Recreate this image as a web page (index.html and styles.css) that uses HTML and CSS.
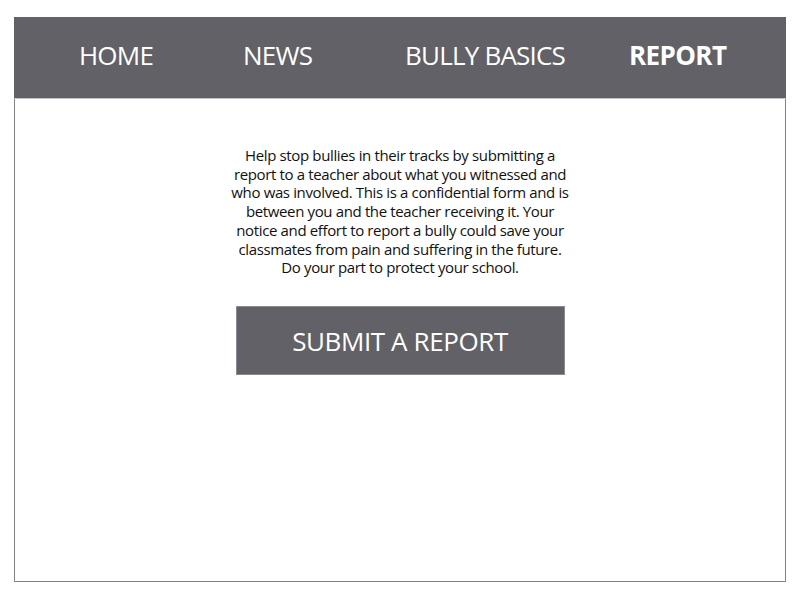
FILE: index.html
```html
<!DOCTYPE html>
<html lang="en">
<head>
<meta charset="utf-8">
<title>Report</title>
<link rel="stylesheet" href="styles.css">
</head>
<body>
<div class="frame">
  <nav class="nav">
    <a class="nav-item">HOME</a>
    <a class="nav-item">NEWS</a>
    <a class="nav-item">BULLY BASICS</a>
    <a class="nav-item active">REPORT</a>
  </nav>
  <main class="content">
    <p class="intro">Help stop bullies in their tracks by submitting a<br>report to a teacher about what you witnessed and<br>who was involved. This is a confidential form and is<br>between you and the teacher receiving it. Your<br>notice and effort to report a bully could save your<br>classmates from pain and suffering in the future.<br>Do your part to protect your school.</p>
    <a class="button">SUBMIT A REPORT</a>
  </main>
</div>
</body>
</html>
```
FILE: styles.css
```css
html, body {
  margin: 0;
  padding: 0;
  background: #ffffff;
}
body {
  font-family: "Open Sans", "Liberation Sans", sans-serif;
}
.frame {
  margin: 17px 0 0 14px;
  width: 772px;
  height: 565px;
  box-sizing: border-box;
  border: 1px solid #818187;
  border-top: none;
  display: flex;
  flex-direction: column;
}
.nav {
  height: 82px;
  box-sizing: border-box;
  background: #616167;
  border-bottom: 1px solid #c4c4c8;
  display: grid;
  grid-template-columns: 164px 162px 224px auto;
  padding: 20px 0 0 65px;
  margin: 0 -1px;
}
.nav-item {
  color: #ffffff;
  font-size: 26px;
  line-height: 36px;
  letter-spacing: -0.8px;
  white-space: nowrap;
}
.nav-item.active {
  font-weight: 700;
  letter-spacing: -0.6px;
}
.content {
  display: flex;
  flex-direction: column;
  align-items: center;
}
.intro {
  margin: 47px 0 0;
  font-size: 15px;
  line-height: 18.7px;
  letter-spacing: -0.36px;
  color: #111111;
  text-align: center;
}
.button {
  margin-top: 29px;
  width: 329px;
  height: 69px;
  box-sizing: border-box;
  background: #616167;
  border: 1px solid #8a8a90;
  color: #ffffff;
  font-size: 26px;
  letter-spacing: -0.4px;
  display: flex;
  align-items: center;
  justify-content: center;
  padding-top: 2px;
}
```
